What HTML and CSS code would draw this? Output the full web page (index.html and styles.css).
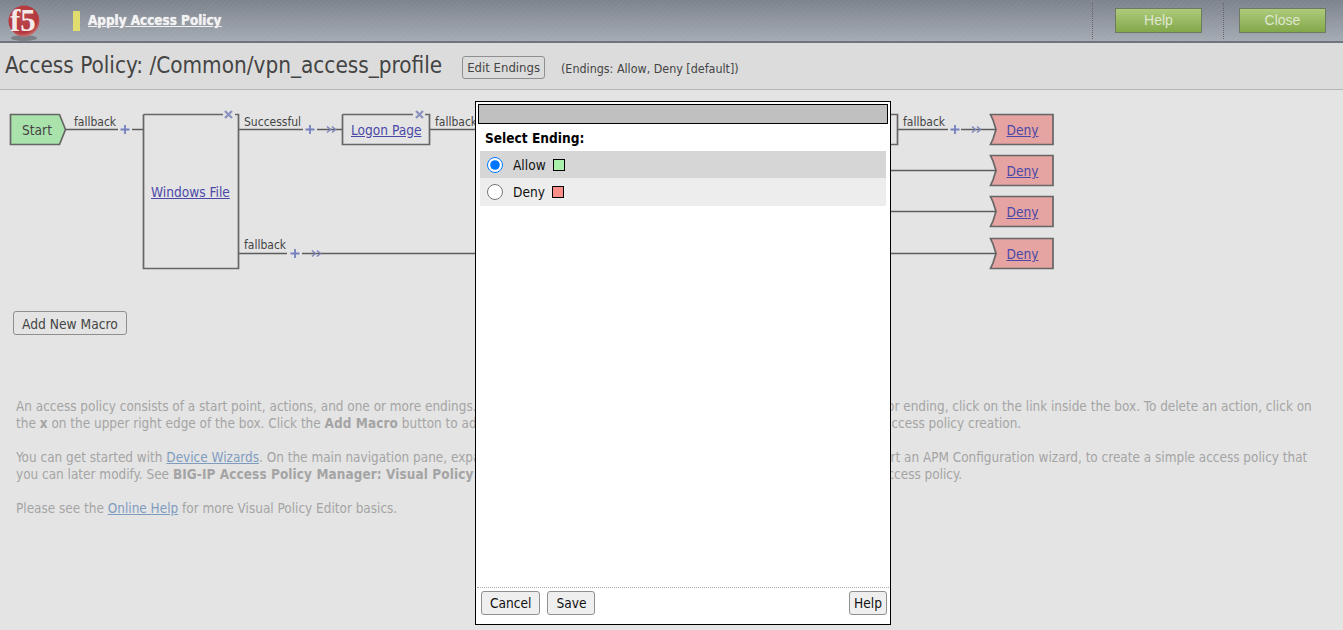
FILE: index.html
```html
<!DOCTYPE html>
<html lang="en">

<head>
    <meta charset="UTF-8">
    <meta name="viewport" content="width=device-width, initial-scale=1.0">
    <title>Access Policy</title>
    <link rel="stylesheet" href="styles.css">
</head>

<body>
    <div class="top-bar">
        <svg class="logo" width="34" height="41" viewBox="0 -3 34 41">
            <defs>
                <radialGradient id="ball" cx="0.45" cy="0.4" r="0.7">
                    <stop offset="0" stop-color="#b8474b" />
                    <stop offset="0.7" stop-color="#b4383d" />
                    <stop offset="1" stop-color="#d9a5a5" />
                </radialGradient>
            </defs>
            <ellipse cx="17" cy="33" rx="13" ry="3" fill="#7a7f86" />
            <circle cx="17" cy="16" r="15.500" fill="url(#ball)" />
            <text x="3" y="26" class="logo-text">f5</text>
        </svg>
        <span class="marker"></span>
        <a class="apply-link" href="#">Apply Access Policy</a>
        <span class="top-spacer"></span>
        <div class="top-btn-wrap"><span class="green-btn">Help</span></div>
        <div class="top-btn-wrap close-wrap"><span class="green-btn">Close</span></div>
    </div>

    <div class="title-bar">
        <h1>Access Policy: /Common/vpn_access_profile</h1>
        <button class="plain-btn edit-btn">Edit Endings</button>
        <span class="endings-note">(Endings: Allow, Deny [default])</span>
    </div>

    <div class="policy-canvas">
        <svg class="wires" width="1343" height="200" viewBox="0 0 1343 200">
            <path class="start-shape" d="M10.500 15.500H59.500L65.500 30.500L59.500 45.500H10.500Z" />
            <path class="deny-shape" d="M990.500 15.500H1053V45.500H990.500L993 40L996 30.500L993 21Z" />
            <path class="deny-shape" d="M990.500 56.500H1053V86.500H990.500L993 81L996 71.500L993 62Z" />
            <path class="deny-shape" d="M990.500 97.500H1053V127.500H990.500L993 122L996 112.500L993 103Z" />
            <path class="deny-shape" d="M990.500 139.500H1053V169.500H990.500L993 164L996 154.500L993 145Z" />
            <path d="M66 30.500H118M132 30.500H143M239 30.500H303M317 30.500H342M430 30.500H476M897 30.500H948M961 30.500H996M891 71.500H996M891 112.500H996M891 154.500H996M239 154.500H287M302 154.500H476" />
            <path class="box-line" d="M143.500 15.500H223M235 15.500H238.500V169.500H143.500V15.500M342.500 15.500H413M425 15.500H429.500V45.500H342.500V15.500M891 15.500H897.500V45.500H891" />
            <g class="plus">
                <path d="M120.500 30.500H129.500M125 26V35" />
                <path d="M305.500 30.500H314.500M310 26V35" />
                <path d="M950.500 30.500H959.500M955 26V35" />
                <path d="M290.500 154.500H299.500M295 150V159" />
            </g>
            <g class="arrows">
                <path d="M327 27.500L330.500 30.500L327 33.500M332 27.500L335.500 30.500L332 33.500" />
                <path d="M972 27.500L975.500 30.500L972 33.500M977 27.500L980.500 30.500L977 33.500" />
                <path d="M312 151.500L315.500 154.500L312 157.500M317 151.500L320.500 154.500L317 157.500" />
            </g>
            <g class="cross">
                <path d="M225 12L232 19M232 12L225 19" />
                <path d="M416 12L423 19M423 12L416 19" />
            </g>
        </svg>

        <div class="node start-node">Start</div>
        <div class="node deny-a"><a href="#">Deny</a></div>
        <div class="node deny-b"><a href="#">Deny</a></div>
        <div class="node deny-c"><a href="#">Deny</a></div>
        <div class="node deny-d"><a href="#">Deny</a></div>
        <a class="node-link windows-link" href="#">Windows File</a>
        <a class="node-link logon-link" href="#">Logon Page</a>
        <span class="wire-label label-1">fallback</span>
        <span class="wire-label label-2">Successful</span>
        <span class="wire-label label-3">fallback</span>
        <span class="wire-label label-4">fallback</span>
        <span class="wire-label label-5">fallback</span>
    </div>

    <button class="plain-btn macro-btn">Add New Macro</button>

    <div class="help-text">
        <div class="help-line shift-1"><span>An access policy consists of a start point, actions, and one or more endings. Click the plus sign to add an action to</span><span>or ending, click on the link inside the box. To delete an action, click on</span></div>
        <div class="help-line shift-2"><span>the <b>x</b> on the upper right edge of the box. Click the <b>Add Macro</b> button to add a macro to the policy and simplify</span><span>access policy creation.</span></div>
        <div class="help-line shift-3 gap-top"><span>You can get started with <a href="#">Device Wizards</a>. On the main navigation pane, expand Access Policy and then start</span><span>start an APM Configuration wizard, to create a simple access policy that</span></div>
        <div class="help-line shift-4"><span>you can later modify. See <b>BIG-IP Access Policy Manager: Visual Policy Editor</b> for details on editing an</span><span>access policy.</span></div>
        <div class="help-line gap-top"><span>Please see the <a href="#">Online Help</a> for more Visual Policy Editor basics.</span></div>
    </div>

    <div class="dialog">
        <div class="dialog-title"></div>
        <div class="dialog-body">
            <div class="select-title">Select Ending:</div>
            <label class="ending-row row-dark">
                <input type="radio" name="ending" checked>
                <span>Allow</span>
                <i class="swatch swatch-green"></i>
            </label>
            <label class="ending-row row-light">
                <input type="radio" name="ending">
                <span>Deny</span>
                <i class="swatch swatch-red"></i>
            </label>
        </div>
        <div class="dialog-footer">
            <button class="plain-btn">Cancel</button>
            <button class="plain-btn">Save</button>
            <button class="plain-btn help-btn">Help</button>
        </div>
    </div>
</body>

</html>
```

FILE: styles.css
```css
body {
    margin: 0;
    height: 630px;
    overflow: hidden;
    position: relative;
    background-color: #e4e4e4;
    font-family: "DejaVu Sans", sans-serif;
    font-stretch: condensed;
    font-size: 13.600px;
    color: #444;
}

a {
    color: #4a49a8;
}

.top-bar {
    height: 41px;
    display: flex;
    align-items: center;
    background: repeating-linear-gradient(135deg, rgba(255, 255, 255, 0.025) 0 2px, transparent 2px 4px), linear-gradient(#7c838d, #a5abb3);
    border-bottom: 2px solid #6f757e;
}

.logo {
    margin: 3px 0 0 7px;
    flex: none;
}

.logo-text {
    font-family: "Liberation Serif", serif;
    font-size: 31px;
    font-weight: bold;
    fill: #f3e9e8;
}

.marker {
    width: 7px;
    height: 20px;
    margin: 0 8px 0 32px;
    background-color: #e0dc6e;
}

.apply-link {
    font-size: 13.400px;
    font-weight: bold;
    color: #f2f2f2;
    text-shadow: 0 0 1px #f2f2f2;
}

.top-spacer {
    flex: 1;
}

.top-btn-wrap {
    height: 36px;
    display: flex;
    align-items: center;
    padding: 0 21px 0 22px;
    border-left: 1px dotted #666;
}

.close-wrap {
    padding: 0 17px 0 15px;
}

.green-btn {
    box-sizing: border-box;
    width: 87px;
    height: 25px;
    line-height: 23px;
    text-align: center;
    border: 1px solid #6f7a62;
    background: linear-gradient(#aecb7c, #83a84a);
    color: #dfe8cf;
    font-family: "Liberation Sans", sans-serif;
    font-stretch: normal;
    font-size: 14px;
}

.title-bar {
    height: 46px;
    display: flex;
    align-items: center;
    background-color: #dcdcdc;
    border-bottom: 1px solid #b5b5b5;
}

.title-bar h1 {
    margin: 0 0 2px 5px;
    font-size: 22.350px;
    font-weight: normal;
    color: #444;
    white-space: nowrap;
}

.plain-btn {
    box-sizing: border-box;
    height: 24px;
    padding: 0 8px;
    border: 1px solid #8f8f8f;
    border-radius: 3px;
    background-color: #efefef;
    font-family: "DejaVu Sans", sans-serif;
    font-stretch: condensed;
    font-size: 13.600px;
    color: #111;
}

.edit-btn {
    height: 23px;
    margin: 3px 0 0 20px;
    padding: 0 4px;
    font-size: 13px;
    background-color: #dcdcdc;
    color: #444;
}

.endings-note {
    margin: 4px 0 0 16px;
    font-size: 12.400px;
    color: #444;
}

.policy-canvas {
    position: relative;
    height: 221px;
}

.wires {
    position: absolute;
    left: 0;
    top: 9px;
}

.wires path {
    fill: none;
    stroke: #5c5c5c;
    stroke-width: 1.500;
}

.wires .box-line,
.wires .start-shape,
.wires .deny-shape {
    stroke: #666;
    stroke-width: 1.700;
}

.wires .start-shape {
    fill: #a9e2ab;
}

.wires .deny-shape {
    fill: #e5a3a1;
}

.wires .plus path {
    stroke: #7480bb;
    stroke-width: 1.800;
}

.wires .arrows path {
    stroke: #7f88bb;
    stroke-width: 1.500;
}

.wires .cross path {
    stroke: #8b92bd;
    stroke-width: 2.200;
}

.node {
    position: absolute;
    left: 1000px;
    width: 45px;
    height: 31px;
    line-height: 33px;
    text-align: center;
}

.start-node {
    left: 10px;
    top: 24px;
    width: 54px;
}

.deny-a { top: 24px; }
.deny-b { top: 65px; }
.deny-c { top: 106px; }
.deny-d { top: 148px; }

.node-link {
    position: absolute;
    line-height: 17px;
    white-space: nowrap;
}

.windows-link { left: 151px; top: 94px; }
.logon-link { left: 351px; top: 32px; }

.wire-label {
    position: absolute;
    font-size: 12px;
    line-height: 16px;
}

.label-1 { left: 74px; top: 24px; }
.label-2 { left: 244px; top: 24px; }
.label-3 { left: 435px; top: 24px; }
.label-4 { left: 903px; top: 24px; }
.label-5 { left: 244px; top: 147px; }

.macro-btn {
    display: block;
    margin: 0 0 0 13px;
    padding: 1px 8px 0;
    font-size: 13.700px;
    background-color: #e4e4e4;
    color: #444;
}

.help-text {
    margin: 63px 0 0 16px;
    color: #a4a4a4;
    font-size: 13.450px;
    line-height: 17px;
}

.help-text a {
    color: #7f9cbf;
}

.help-text b {
    letter-spacing: 0.100px;
}

.help-line {
    display: flex;
    white-space: nowrap;
}

.help-line span:first-child {
    width: 873px;
    flex: none;
    overflow: hidden;
}

/* right hand side of each line, where it comes out from under the dialog */
.shift-1 span:last-child { margin-left: -2px; }
.shift-2 span:last-child { margin-left: -5px; }
.shift-3 span:last-child { margin-left: -17px; }
.shift-4 span:last-child { margin-left: -9px; }

.gap-top {
    margin-top: 17px;
}

.dialog {
    position: absolute;
    left: 475px;
    top: 101px;
    width: 416px;
    height: 524px;
    box-sizing: border-box;
    display: flex;
    flex-direction: column;
    padding: 2px 1px 0;
    background-color: #fff;
    border: 1px solid #000;
}

.dialog-title {
    height: 18px;
    margin: 0 1px;
    background-color: #c0c0c0;
    border: 1px solid #000;
}

.dialog-body {
    flex: 1;
    padding: 0 3px;
    color: #111;
}

.select-title {
    height: 27px;
    line-height: 29px;
    padding-left: 5px;
    font-weight: bold;
    color: #000;
}

.ending-row {
    height: 27px;
    display: flex;
    align-items: center;
    gap: 7px;
}

.ending-row input {
    width: 16px;
    height: 16px;
    margin: 0 3px 0 7px;
}

.row-dark {
    background-color: #d6d6d6;
}

.row-light {
    height: 28px;
    background-color: #ededed;
}

.swatch {
    width: 10px;
    height: 10px;
    border: 1px solid #000;
}

.swatch-green {
    background-color: #a9f0ab;
}

.swatch-red {
    background-color: #f98f88;
}

.dialog-footer {
    height: 33px;
    display: flex;
    align-items: flex-start;
    gap: 7px;
    padding: 3px 2px 0 4px;
    border-top: 1px dotted #aaa;
}

.help-btn {
    margin-left: auto;
    padding: 0 4px;
}
```
